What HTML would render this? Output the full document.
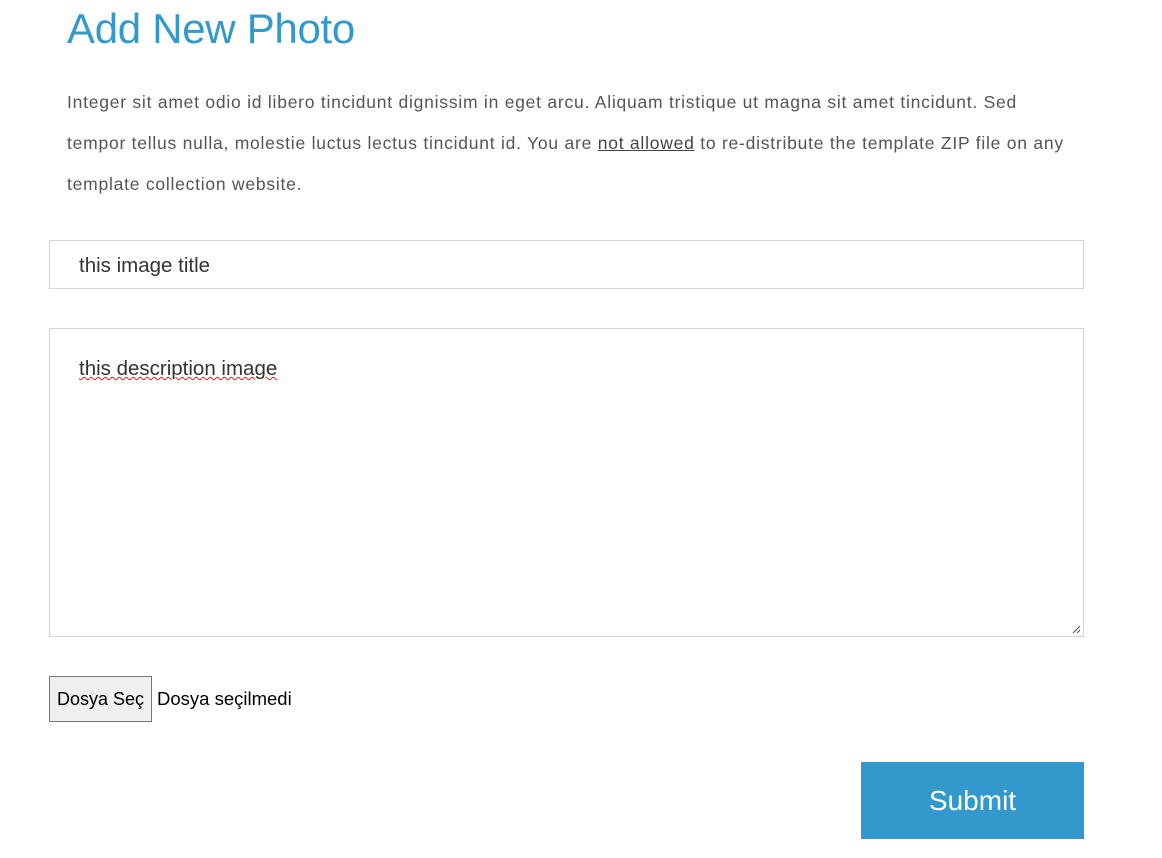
<!DOCTYPE html>
<html><head><meta charset="utf-8"><style>
body{margin:0;background:#fff;font-family:"Liberation Sans",sans-serif;width:1162px;height:858px;overflow:hidden;position:relative}
h1{position:absolute;left:67px;top:5px;margin:0;font-weight:normal;font-size:42px;color:#3399cc;letter-spacing:-0.3px}
p{position:absolute;left:67px;top:82px;width:1090px;margin:0;font-size:17.5px;line-height:41px;color:#555;letter-spacing:0.76px;white-space:nowrap}
p u{color:#444}
.in{position:absolute;left:49px;width:1033px;border:1px solid #d5d5d5;box-sizing:content-box;font-size:20.5px;color:#333}
.t{top:240px;height:47px;line-height:49px;text-indent:29px}
.d{top:328px;height:307px}
.d span{position:absolute;left:29px;top:28px;text-decoration:underline wavy #d22;text-decoration-thickness:1px}
.btn{position:absolute;left:49px;top:676px;width:103px;height:46px;border:1px solid #777;background:#efefef;box-sizing:border-box;font-size:18px;line-height:44px;text-align:center;color:#000}
.fn{position:absolute;left:157px;top:688px;font-size:18.5px;color:#000}
.sub{position:absolute;left:861px;top:762px;width:223px;height:77px;background:#3399cc;color:#fff;font-size:28px;line-height:77px;text-align:center}
</style></head><body>
<h1>Add New Photo</h1>
<p>Integer sit amet odio id libero tincidunt dignissim in eget arcu. Aliquam tristique ut magna sit amet tincidunt. Sed<br>tempor tellus nulla, molestie luctus lectus tincidunt id. You are <u>not allowed</u> to re-distribute the template ZIP file on any<br>template collection website.</p>
<div class="in t">this image title</div>
<div class="in d"><span>this description image</span>
<svg style="position:absolute;right:2px;bottom:2px" width="10" height="10"><path d="M9 2L2 9M9 6L6 9" stroke="#555" stroke-width="1"/></svg></div>
<div class="btn">Dosya Seç</div>
<div class="fn">Dosya seçilmedi</div>
<div class="sub">Submit</div>
</body></html>
